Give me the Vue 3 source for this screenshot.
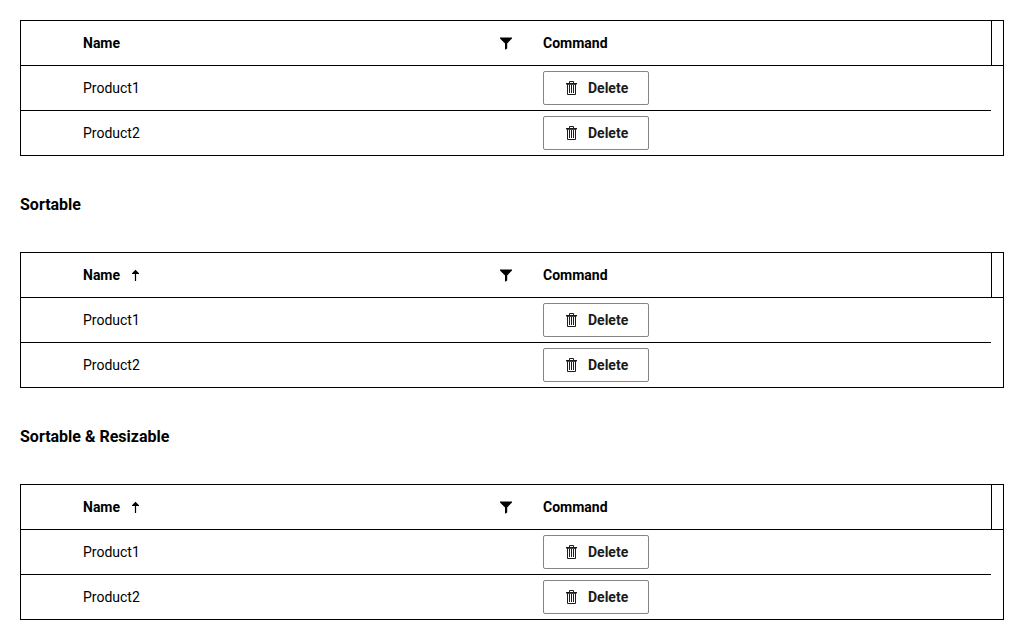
<script setup>
import { reactive } from 'vue'

const makeRows = () => [{ id: 1, name: 'Product1' }, { id: 2, name: 'Product2' }]

const grids = reactive([
  { title: '', sorted: false, rows: makeRows() },
  { title: 'Sortable', sorted: true, rows: makeRows() },
  { title: 'Sortable & Resizable', sorted: true, rows: makeRows() },
])

function remove(grid, id) {
  grid.rows = grid.rows.filter((row) => row.id !== id)
}
</script>

<template>
  <main class="page">
    <section v-for="(grid, i) in grids" :key="i">
      <h2 v-if="grid.title" class="title">{{ grid.title }}</h2>
      <div class="grid">
        <table class="table">
          <colgroup>
            <col class="col-indent" />
            <col />
            <col />
            <col class="col-gutter" />
          </colgroup>
          <thead>
            <tr>
              <th></th>
              <th scope="col">
                <div class="head">
                  <span>Name</span>
                  <svg v-if="grid.sorted" class="arrow" width="7" height="12" viewBox="0 0 7 12" aria-hidden="true">
                    <path d="M3.5 0.8L7 4.3V5H4.1V12H2.9V5H0V4.3Z" />
                  </svg>
                  <button class="filter" type="button" aria-label="Filter Name">
                    <svg width="12" height="14" viewBox="0 0 12 14" aria-hidden="true">
                      <path d="M0 1.4H12V2.6L7.2 7.4V12.4L5 13.8V7.4L0 2.6Z" />
                    </svg>
                  </button>
                </div>
              </th>
              <th scope="col">Command</th>
              <th class="gutter"></th>
            </tr>
          </thead>
          <tbody>
            <tr v-for="row in grid.rows" :key="row.id">
              <td></td>
              <td>{{ row.name }}</td>
              <td>
                <button class="delete" type="button" @click="remove(grid, row.id)">
                  <svg width="16" height="16" viewBox="0 0 16 16" fill="none" stroke="currentColor" aria-hidden="true">
                    <path d="M3 3.5H14M3.5 4.3H13.5M6.5 3V1.5H10.5V3M4.5 4V14.5H12.5V4M6.5 5V13M8.5 5V13M10.5 5V13" />
                  </svg>
                  <span>Delete</span>
                </button>
              </td>
              <td></td>
            </tr>
          </tbody>
        </table>
      </div>
    </section>
  </main>
</template>

<style>
body {
  margin: 0;
  background: #fff;
}
</style>

<style scoped>
.page {
  padding: 20px;
  font: 14px/20px Roboto, sans-serif;
  color: #000;
}
.title {
  margin: 39px 0 37px;
  font-size: 16px;
  line-height: 20px;
  font-weight: 700;
}
.grid {
  border: 1px solid #000;
}
.table {
  width: 100%;
  table-layout: fixed;
  border-collapse: separate;
  border-spacing: 0;
}
.col-indent {
  width: 50px;
}
.col-gutter {
  width: 12px;
}
th,
td {
  box-sizing: border-box;
  height: 45px;
  padding: 0 12px;
  border-bottom: 1px solid #000;
  text-align: left;
  vertical-align: middle;
}
th {
  font-weight: 700;
}
th:last-child,
td:last-child {
  padding: 0;
}
.gutter {
  border-left: 1px solid #000;
}
td:last-child {
  border-bottom: 0;
}
tbody tr:last-child td {
  height: 44px;
  border-bottom: 0;
}
.head {
  display: flex;
  align-items: center;
  gap: 12px;
}
.arrow,
.filter svg,
.delete svg {
  display: block;
}
.filter {
  margin: 0 7px 0 auto;
  padding: 0;
  border: 0;
  background: none;
  color: inherit;
}
.delete {
  display: flex;
  align-items: center;
  gap: 9px;
  box-sizing: border-box;
  height: 34px;
  padding: 0 20px 0 19px;
  border: 1px solid #858585;
  border-radius: 2px;
  background: #fff;
  color: #1b1b1b;
  font: 700 14px/20px Roboto, sans-serif;
}
</style>
